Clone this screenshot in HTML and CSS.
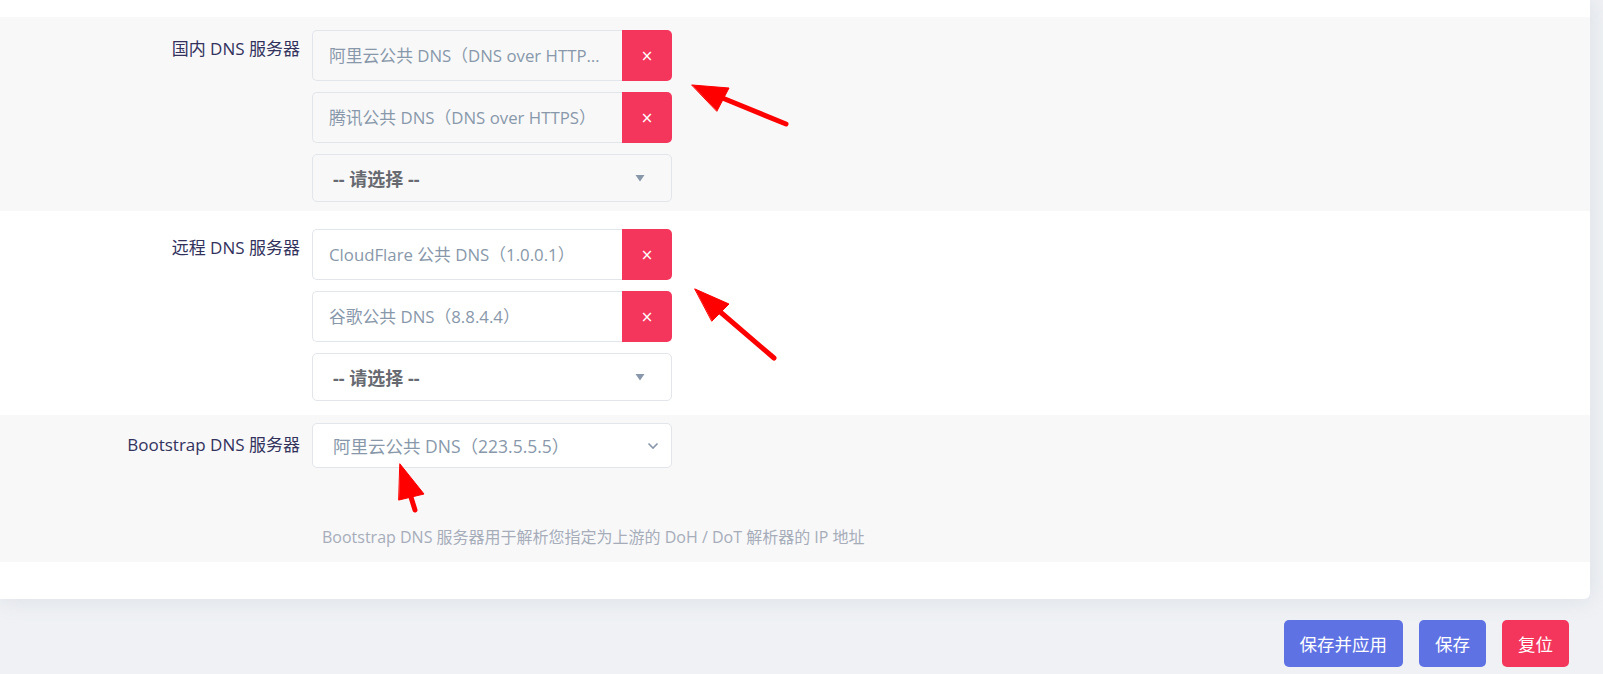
FILE: index.html
```html
<!DOCTYPE html>
<html lang="zh-CN">

<head>
    <meta charset="UTF-8">
    <meta name="viewport" content="width=device-width, initial-scale=1.0">
    <title>DNS 服务器设置</title>
    <link rel="stylesheet" href="styles.css">
</head>

<body>
    <div class="page">
        <div class="card">
            <!-- Domestic DNS -->
            <div class="row row-alt row-first">
                <div class="row-label">国内 DNS 服务器</div>
                <div class="row-field">
                    <div class="dyn-item">
                        <span class="dyn-text">阿里云公共 DNS（DNS over HTTPS）</span>
                        <button class="dyn-remove">×</button>
                    </div>
                    <div class="dyn-item">
                        <span class="dyn-text">腾讯公共 DNS（DNS over HTTPS）</span>
                        <button class="dyn-remove">×</button>
                    </div>
                    <div class="dyn-select">
                        <span>-- 请选择 --</span>
                        <svg class="caret" width="10" height="8" viewBox="0 0 10 8">
                            <polygon points="0.5,1 9.5,1 5,7.5" fill="#8898aa" />
                        </svg>
                    </div>
                </div>
            </div>

            <!-- Remote DNS -->
            <div class="row row-second">
                <div class="row-label">远程 DNS 服务器</div>
                <div class="row-field">
                    <div class="dyn-item">
                        <span class="dyn-text">CloudFlare 公共 DNS（1.0.0.1）</span>
                        <button class="dyn-remove">×</button>
                    </div>
                    <div class="dyn-item">
                        <span class="dyn-text">谷歌公共 DNS（8.8.4.4）</span>
                        <button class="dyn-remove">×</button>
                    </div>
                    <div class="dyn-select">
                        <span>-- 请选择 --</span>
                        <svg class="caret" width="10" height="8" viewBox="0 0 10 8">
                            <polygon points="0.5,1 9.5,1 5,7.5" fill="#8898aa" />
                        </svg>
                    </div>
                </div>
            </div>

            <!-- Bootstrap DNS -->
            <div class="row row-alt row-third">
                <div class="row-label">Bootstrap DNS 服务器</div>
                <div class="row-field">
                    <div class="plain-select">
                        <span>阿里云公共 DNS（223.5.5.5）</span>
                        <svg class="chevron" width="12" height="8" viewBox="0 0 12 8">
                            <polyline points="1.5,1.5 6,6 10.5,1.5" fill="none" stroke="#8898aa" stroke-width="1.6" />
                        </svg>
                    </div>
                    <div class="help-text">Bootstrap DNS 服务器用于解析您指定为上游的 DoH / DoT 解析器的 IP 地址</div>
                </div>
            </div>
        </div>

        <div class="actions">
            <button class="btn btn-primary">保存并应用</button>
            <button class="btn btn-primary">保存</button>
            <button class="btn btn-danger">复位</button>
        </div>

        <!-- annotation arrows drawn over the screenshot -->
        <svg class="marks" width="1603" height="674" viewBox="0 0 1603 674">
            <g stroke="#ff0000" stroke-width="5" stroke-linecap="round" fill="#ff0000">
                <line x1="786" y1="124" x2="720" y2="97" />
                <polygon points="692,85 729,88 717,111" stroke-width="1" />
                <line x1="774" y1="358" x2="718" y2="310" />
                <polygon points="695,289 729,304 712,321" stroke-width="1" />
                <line x1="415" y1="510" x2="410" y2="494" />
                <polygon points="400,464 424,494 399,500" stroke-width="1" />
            </g>
        </svg>
    </div>
</body>

</html>
```

FILE: styles.css
```css
* {
    box-sizing: border-box;
}

body {
    margin: 0;
    background: #eff1f4;
    font-family: "Open Sans", "Noto Sans CJK SC", sans-serif;
    font-size: 17px;
    color: #32325d;
}

.page {
    position: relative;
    width: 1603px;
    height: 674px;
    overflow: hidden;
    padding-right: 13px;
}

.card {
    background: #fff;
    border-radius: 0 0 6px 0;
    box-shadow: 0 0 22px rgba(136, 152, 170, 0.2);
    padding: 17px 0 37px;
}

.row {
    display: grid;
    grid-template-columns: 300px 360px;
    column-gap: 12px;
}

.row-alt {
    background: #f8f8f9;
}

.row-first {
    padding: 13px 0 9px;
}

.row-second {
    padding: 18px 0 14px;
}

.row-third {
    padding: 8px 0 15px;
}

.row-label {
    text-align: right;
    line-height: 24px;
    padding-top: 7px;
    white-space: nowrap;
}

.row-third .row-label {
    padding-top: 10px;
}

.row-field {
    display: flex;
    flex-direction: column;
    gap: 11px;
}

.dyn-item {
    display: flex;
    height: 51px;
}

.dyn-text {
    flex: 1;
    min-width: 0;
    padding: 0 16px;
    line-height: 49px;
    font-size: 16.8px;
    color: #8898aa;
    border: 1px solid #e2e5e9;
    border-right: 0;
    border-radius: 5px 0 0 5px;
    overflow: hidden;
    white-space: nowrap;
    text-overflow: ellipsis;
}

.dyn-remove {
    width: 50px;
    border: 0;
    padding: 0;
    background: #f5365c;
    color: #fff;
    border-radius: 0 5px 5px 0;
    font-family: "DejaVu Sans", sans-serif;
    font-size: 15px;
}

.dyn-select,
.plain-select {
    display: flex;
    align-items: center;
    justify-content: space-between;
    height: 48px;
    padding: 0 26px 0 20px;
    border: 1px solid #e2e5e9;
    border-radius: 5px;
    font-size: 18px;
    font-weight: 700;
    color: #676a70;
}

.plain-select {
    height: 45px;
    padding: 0 12px 0 20px;
    background: #fff;
    font-size: 17.5px;
    font-weight: 400;
    color: #8898aa;
}

.help-text {
    margin-top: 48px;
    padding-left: 10px;
    line-height: 20px;
    font-size: 16px;
    color: #a6adb9;
    white-space: nowrap;
}

.actions {
    display: flex;
    justify-content: flex-end;
    gap: 16px;
    margin-top: 21px;
    padding-right: 21px;
}

.btn {
    height: 47px;
    padding: 0 16px;
    border: 0;
    border-radius: 5px;
    color: #fff;
    font-family: "Noto Sans CJK SC", sans-serif;
    font-size: 17.5px;
}

.btn-primary {
    background: #5e72e4;
}

.btn-danger {
    background: #f5365c;
}

.marks {
    position: absolute;
    left: 0;
    top: 0;
    pointer-events: none;
}
```
